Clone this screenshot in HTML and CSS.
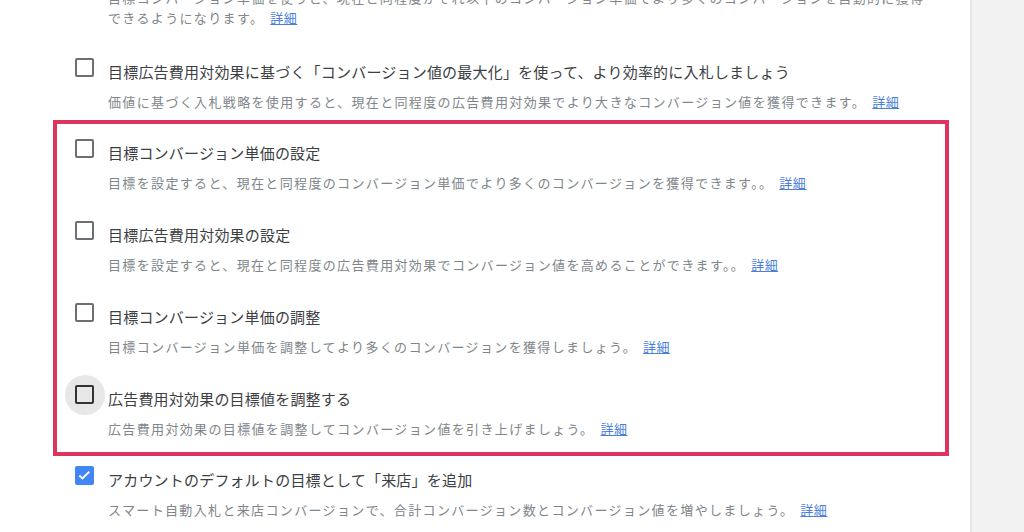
FILE: index.html
```html
<html lang="ja">
<head>
    <meta charset="UTF-8">
    <title>入札戦略の提案</title>
    <link rel="stylesheet" href="styles.css">
</head>
<body>
<div class="page">
    <main class="content">
        <div class="option option-cut">
            <span class="box"></span>
            <div class="text">
                <p class="title">目標コンバージョン単価に基づく「コンバージョン数の最大化」を使って、より効率的に入札しましょう</p>
                <p class="desc">目標コンバージョン単価を使うと、現在と同程度かそれ以下のコンバージョン単価でより多くのコンバージョンを自動的に獲得<br>できるようになります。<a href="#">詳細</a></p>
            </div>
        </div>

        <div class="option">
            <span class="box"></span>
            <div class="text">
                <p class="title">目標広告費用対効果に基づく「コンバージョン値の最大化」を使って、より効率的に入札しましょう</p>
                <p class="desc">価値に基づく入札戦略を使用すると、現在と同程度の広告費用対効果でより大きなコンバージョン値を獲得できます。<a href="#">詳細</a></p>
            </div>
        </div>

        <div class="highlight">
            <div class="option">
                <span class="box"></span>
                <div class="text">
                    <p class="title">目標コンバージョン単価の設定</p>
                    <p class="desc">目標を設定すると、現在と同程度のコンバージョン単価でより多くのコンバージョンを獲得できます。。<a href="#">詳細</a></p>
                </div>
            </div>
            <div class="option">
                <span class="box"></span>
                <div class="text">
                    <p class="title">目標広告費用対効果の設定</p>
                    <p class="desc">目標を設定すると、現在と同程度の広告費用対効果でコンバージョン値を高めることができます。。<a href="#">詳細</a></p>
                </div>
            </div>
            <div class="option">
                <span class="box"></span>
                <div class="text">
                    <p class="title">目標コンバージョン単価の調整</p>
                    <p class="desc">目標コンバージョン単価を調整してより多くのコンバージョンを獲得しましょう。<a href="#">詳細</a></p>
                </div>
            </div>
            <div class="option">
                <span class="box hover"></span>
                <div class="text">
                    <p class="title">広告費用対効果の目標値を調整する</p>
                    <p class="desc">広告費用対効果の目標値を調整してコンバージョン値を引き上げましょう。<a href="#">詳細</a></p>
                </div>
            </div>
        </div>

        <div class="option option-last">
            <span class="box checked">
                <svg viewBox="0 0 19 19" width="15" height="15"><path d="M3 9.5l3.8 3.8L15.5 4.8" fill="none" stroke="#fff" stroke-width="2.4"/></svg>
            </span>
            <div class="text">
                <p class="title">アカウントのデフォルトの目標として「来店」を追加</p>
                <p class="desc">スマート自動入札と来店コンバージョンで、合計コンバージョン数とコンバージョン値を増やしましょう。<a href="#">詳細</a></p>
            </div>
        </div>
    </main>
    <aside class="side"></aside>
</div>
</body>
</html>
```

FILE: styles.css
```css
body {
    margin: 0;
    background: #fff;
    font-family: "Noto Sans CJK JP", "Noto Sans", sans-serif;
    overflow: hidden;
}

.page {
    display: flex;
    height: 532px;
}

.content {
    width: 896px;
    margin-left: 53px;
    margin-right: 21px;
    display: flex;
    flex-direction: column;
    gap: 31px;
}

.side {
    flex: 1;
    background: #f2f2f2;
    border-left: 2px solid #e6e6e6;
}

.option {
    display: flex;
    align-items: flex-start;
    padding-left: 22px;
}

.option-cut {
    margin-top: -43px;
    margin-bottom: 2px;
}

.box {
    position: relative;
    flex: none;
    box-sizing: border-box;
    width: 19px;
    height: 19px;
    margin-top: -3px;
    margin-right: 14px;
    border: 2px solid #6b6e72;
    border-radius: 2px;
    display: flex;
    align-items: center;
    justify-content: center;
}

.box.hover {
    border-color: #333;
}

.box.hover::before {
    content: "";
    position: absolute;
    left: -12.5px;
    top: -12.5px;
    width: 40px;
    height: 40px;
    border-radius: 50%;
    background: #e7e7e7;
    z-index: -1;
}

.box.checked {
    background: #4285f4;
    border-color: #4285f4;
}

.text p {
    margin: 0;
}

.title {
    font-size: 15px;
    line-height: 22px;
    letter-spacing: 0.2px;
    color: #3c4043;
}

.desc {
    margin-top: 9px !important;
    font-size: 13px;
    line-height: 20px;
    letter-spacing: 1.35px;
    color: #80868b;
}

.desc a {
    margin-left: 6px;
    color: #4a80dc;
    letter-spacing: 0.5px;
    text-decoration: underline;
}

.highlight {
    border: 4px solid #dc3560;
    padding: 18px 0 13px 0;
    margin-top: -23px;
    display: flex;
    flex-direction: column;
    gap: 31px;
}

.highlight .option {
    padding-left: 18px;
}

.option-last {
    margin-top: -18px;
}
```
